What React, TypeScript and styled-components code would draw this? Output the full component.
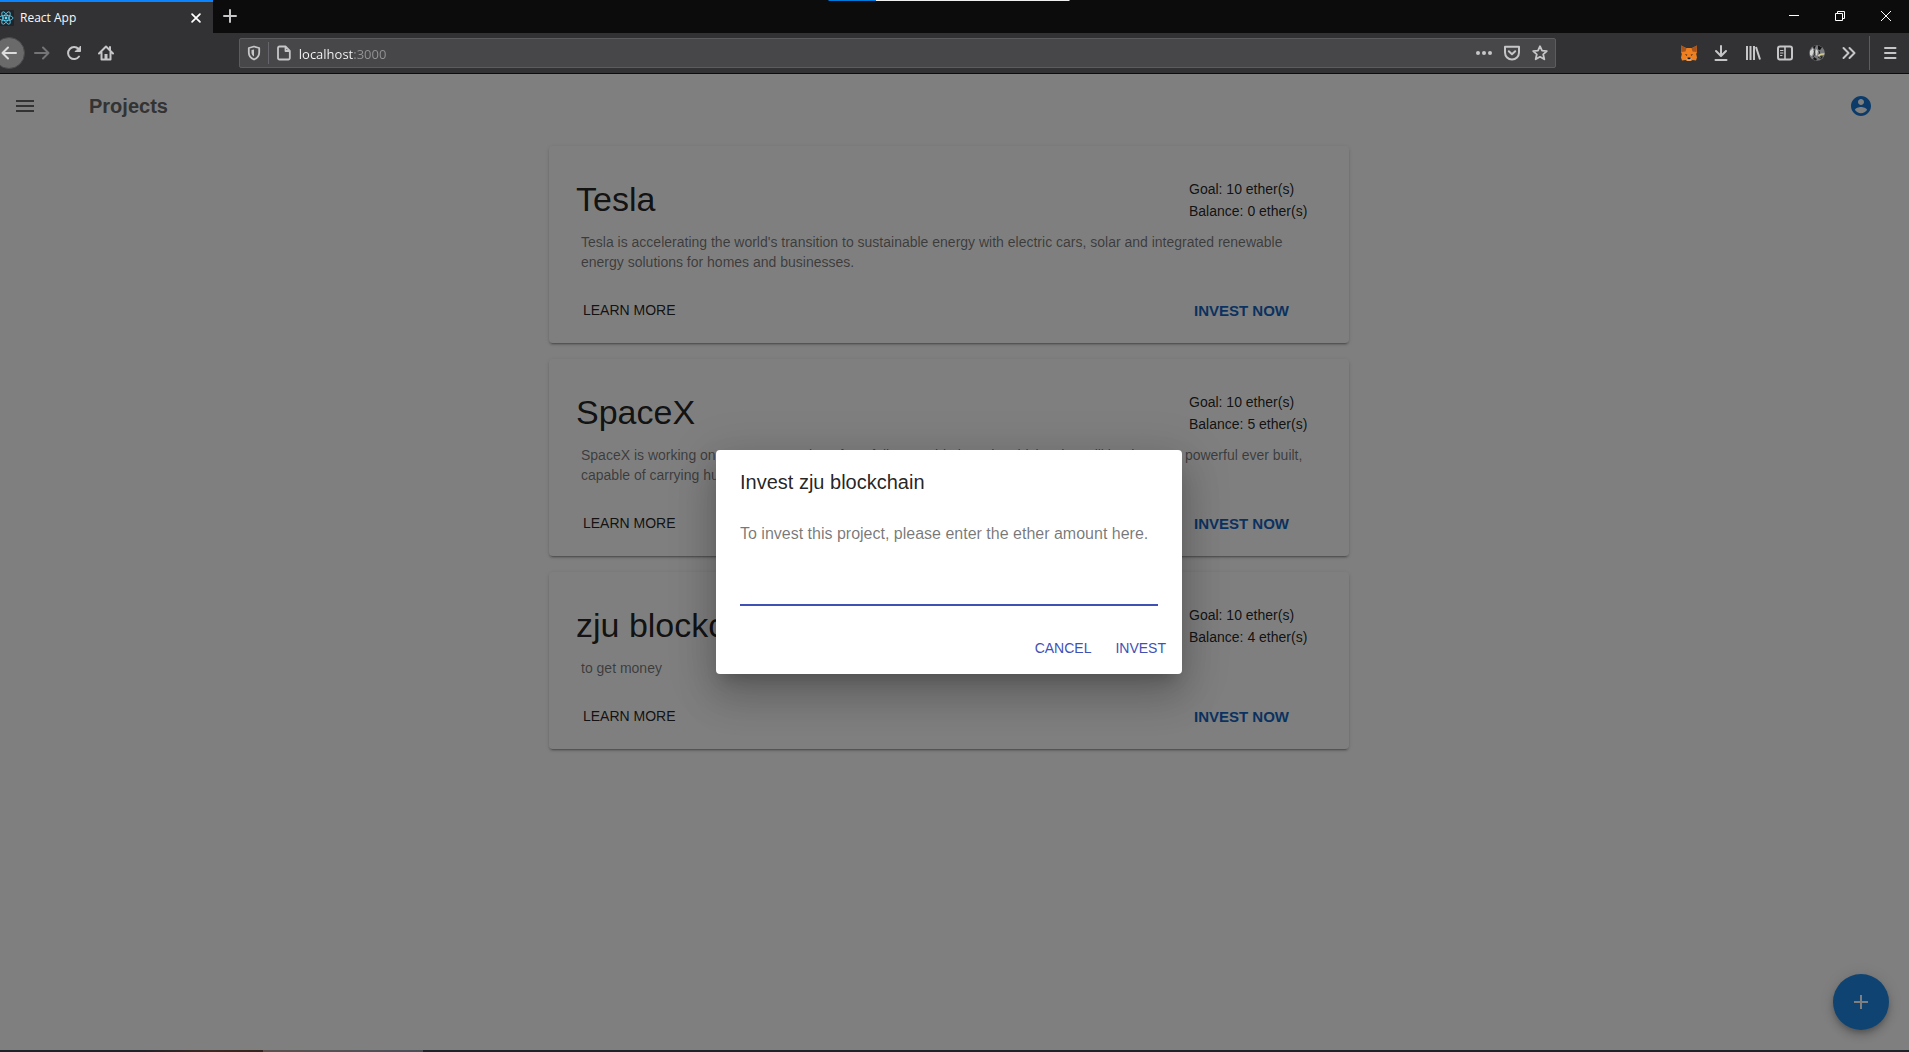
import React, { useState } from "react";
import styled, { createGlobalStyle } from "styled-components";

const GlobalStyle = createGlobalStyle`
  *, *::before, *::after { box-sizing: border-box; }
  html, body { margin: 0; background: #0c0c0d; overflow: hidden; }
  body { font-family: "Liberation Sans", Arial, sans-serif; }
  h1, h2, p { margin: 0; padding: 0; font-weight: 400; }
  button, input { font-family: inherit; margin: 0; border: 0; outline: 0; }
  button { padding: 0; background: transparent; cursor: pointer; }
`;

/* The window hangs over the left screen edge by 11px. */
const Window = styled.div`
  position: relative;
  display: flex;
  flex-direction: column;
  min-height: 100vh;
  margin-left: -11px;
`;

/* ---------- browser chrome ---------- */

const DragHint = styled.div`
  position: absolute;
  top: 0;
  left: 50%;
  width: 241px;
  height: 1px;
  transform: translateX(-50%);
  background: linear-gradient(90deg, #0078d7 48px, #f0f0f0 48px);
`;

const TabStrip = styled.header`
  display: flex;
  height: 33px;
  background: #0c0c0d;
`;

const Tab = styled.div`
  display: flex;
  align-items: center;
  gap: 6px;
  width: 224px;
  padding: 0 5px 0 9px;
  border-top: 2px solid #0a84ff;
  background: #323234;
  color: #f9f9fa;
  font: 12px/16px "Open Sans", "Noto Sans", sans-serif;
`;

const TabTitle = styled.span`
  flex: 1;
`;

const ChromeButton = styled.button<{ $width?: number; $dim?: boolean }>`
  display: flex;
  align-items: center;
  justify-content: center;
  width: ${(p) => p.$width ?? 32}px;
  height: 32px;
  flex: none;
  color: ${(p) => (p.$dim ? "#747476" : "#c6c6c8")};
`;

const BackButton = styled(ChromeButton)`
  margin-right: 1px;
  border: 1px solid #4a4a4c;
  border-radius: 50%;
  background: #6a6a6b;
  color: #dcdcdd;
`;

const WindowControls = styled.div`
  display: flex;
  margin-left: auto;
  color: #fff;
`;

const ControlButton = styled(ChromeButton)`
  color: #fff;
`;

const Toolbar = styled.nav`
  display: flex;
  align-items: center;
  height: 41px;
  padding: 0 3px 0 4px;
  border-bottom: 1px solid #0c0c0d;
  background: #323234;
`;

const Spring = styled.div`
  flex: 117 1 0;
`;

const AddressBar = styled.div`
  display: flex;
  align-items: center;
  flex: 1317 1 0;
  height: 30px;
  padding: 0 1px 0 0;
  border: 1px solid #5c5c5e;
  border-radius: 2px;
  background: #474749;
`;

const AddressDivider = styled.span`
  width: 1px;
  height: 22px;
  background: #65656c;
`;

const AddressInput = styled.input`
  flex: 1;
  min-width: 0;
  padding: 1px 0 0;
  color: transparent;
  background: linear-gradient(90deg, #f9f9fa 55px, #949496 55px);
  background-clip: text;
  -webkit-background-clip: text;
  font: 13px/20px "Open Sans", "Noto Sans", sans-serif;
`;

const ToolbarDivider = styled.span`
  width: 1px;
  height: 34px;
  margin: 0 4px;
  background: #5c5c5e;
`;

/* ---------- page ---------- */

const Page = styled.div`
  position: relative;
  flex: 1;
  background: #fff;
  color: rgba(0, 0, 0, 0.87);
`;

const AppBar = styled.header`
  display: flex;
  align-items: center;
  height: 64px;
  padding: 0 12px;
  color: #666;
`;

const IconButton = styled.button`
  display: flex;
  align-items: center;
  justify-content: center;
  width: 48px;
  height: 48px;
  color: inherit;
`;

const AccountButton = styled(IconButton)`
  margin: 0 12px 0 auto;
  color: #1976d2;
`;

const PageTitle = styled.h1`
  margin-left: 40px;
  font-size: 20px;
  line-height: 32px;
  font-weight: 700;
`;

const ProjectList = styled.main`
  display: flex;
  flex-direction: column;
  gap: 16px;
  max-width: 800px;
  margin: 8px auto;
`;

const Card = styled.article`
  padding: 32px 26px 17px 27px;
  border-radius: 4px;
  background: #fff;
  box-shadow: 0 3px 1px -2px rgba(0, 0, 0, 0.2), 0 2px 2px 0 rgba(0, 0, 0, 0.14),
    0 1px 5px 0 rgba(0, 0, 0, 0.12);
`;

const CardRow = styled.div`
  display: grid;
  grid-template-columns: 1fr 134px;
`;

const CardTitle = styled.h2`
  font-size: 34px;
  line-height: 42px;
`;

const Funding = styled.div`
  font-size: 14px;
  line-height: 22px;
`;

const Description = styled.p`
  margin: 10px 5px 22px;
  color: rgba(0, 0, 0, 0.54);
  font-size: 14px;
  line-height: 20px;
`;

const CardButton = styled.button<{ $strong?: boolean }>`
  justify-self: start;
  height: 32px;
  padding: 0 5px;
  color: ${(p) => (p.$strong ? "#1565c0" : "rgba(0, 0, 0, 0.87)")};
  font-size: ${(p) => (p.$strong ? 15 : 14)}px;
  font-weight: ${(p) => (p.$strong ? 700 : 400)};
  text-transform: uppercase;
`;

const CardActions = styled(CardRow)`
  padding-left: 2px;
`;

const Fab = styled.button`
  position: absolute;
  right: 20px;
  bottom: 20px;
  display: flex;
  align-items: center;
  justify-content: center;
  width: 56px;
  height: 56px;
  border-radius: 50%;
  background: #1e88e5;
  color: #fff;
  box-shadow: 0 3px 5px -1px rgba(0, 0, 0, 0.2), 0 6px 10px 0 rgba(0, 0, 0, 0.14),
    0 1px 18px 0 rgba(0, 0, 0, 0.12);
`;

/* ---------- dialog ---------- */

const Backdrop = styled.div`
  position: absolute;
  inset: 0;
  display: flex;
  align-items: center;
  justify-content: center;
  background: rgba(0, 0, 0, 0.5);
`;

const Dialog = styled.form`
  width: 466px;
  border-radius: 4px;
  background: #fff;
  box-shadow: 0 11px 15px -7px rgba(0, 0, 0, 0.2), 0 24px 38px 3px rgba(0, 0, 0, 0.14),
    0 9px 46px 8px rgba(0, 0, 0, 0.12);
`;

const DialogTitle = styled.h2`
  padding: 16px 24px;
  font-size: 20px;
  line-height: 32px;
`;

const DialogBody = styled.div`
  display: flex;
  flex-direction: column;
  gap: 12px;
  padding: 8px 24px 16px;
`;

const DialogText = styled.label`
  color: rgba(0, 0, 0, 0.54);
  font-size: 16px;
  line-height: 24px;
`;

const AmountInput = styled.input`
  width: 100%;
  height: 48px;
  padding: 16px 0 0;
  border-bottom: 2px solid #3f51b5;
  background: transparent;
  font-size: 16px;
`;

const DialogActions = styled.div`
  display: flex;
  justify-content: flex-end;
  gap: 8px;
  padding: 8px;
`;

const DialogButton = styled.button`
  min-width: 64px;
  height: 36px;
  padding: 0 8px;
  color: #3f51b5;
  font-size: 14px;
  text-transform: uppercase;
`;

const TaskbarEdge = styled.footer`
  height: 2px;
  background: linear-gradient(
    90deg,
    #1c242a 150px,
    #3a2a24 220px,
    #33251f 274px,
    #5a5250 274px,
    #485058 434px,
    #1c242a 434px
  );
`;

/* ---------- icons ---------- */

type IconProps = { size?: number; children: React.ReactNode };

const LineIcon = ({ size = 16, children }: IconProps) => (
  <svg
    width={size}
    height={size}
    viewBox="0 0 16 16"
    fill="none"
    stroke="currentColor"
    strokeWidth="2"
    strokeLinecap="round"
    strokeLinejoin="round"
    aria-hidden="true"
  >
    {children}
  </svg>
);

const ReactLogo = () => (
  <svg width="16" height="16" viewBox="0 0 16 16" aria-hidden="true">
    <rect width="16" height="16" rx="1" fill="#20232a" />
    <g fill="none" stroke="#61dafb" strokeWidth="0.8">
      <ellipse cx="8" cy="8" rx="7" ry="2.7" />
      <ellipse cx="8" cy="8" rx="7" ry="2.7" transform="rotate(60 8 8)" />
      <ellipse cx="8" cy="8" rx="7" ry="2.7" transform="rotate(120 8 8)" />
    </g>
    <circle cx="8" cy="8" r="1.4" fill="#61dafb" />
  </svg>
);

const FoxIcon = () => (
  <svg width="16" height="16" viewBox="0 0 16 16" aria-hidden="true">
    <path d="M0 .5 5 3h6l5-2.500V7l-.8 2 .8 3.500-1 3-3.500-.5-1.500 1H6l-1.500-1L1 15.500l-1-3L.8 9 0 7z" fill="#f0801f" />
    <path d="M0 .5 5.500 3.200 4.500 6.500.3 7z" fill="#a8541d" />
    <path d="M16 .5 10.500 3.200l1 3.300 4.200.5z" fill="#a8541d" />
    <path d="M3.700 9.300l2.600.3-.4 1.300zM12.300 9.300l-2.600.3.400 1.300z" fill="#4b3324" />
    <path d="M5.500 13h5l-.8 2.500H6.300z" fill="#d9c3b0" />
    <path d="M6.600 12.600h2.800l.2 1.600H6.400z" fill="#201a18" />
  </svg>
);

const PhotoIcon = () => (
  <svg width="16" height="16" viewBox="0 0 16 16" aria-hidden="true">
    <circle cx="8" cy="8" r="7.800" fill="#77797a" />
    <path d="M4 1.500 7 .5 5 5zM9 .500l4 1.800-2 3-2-1zM5 12l3 2-1 1.600-3-1.400z" fill="#151515" />
    <path d="M1 6l3-3 1 3-2 5-2-1zM7 4l2 2-1 5-2-2z" fill="#d2d3d3" />
    <path d="M5 5l1 4-2 3M10 6l1 3M9 12l3 2" stroke="#2c2c2c" fill="none" />
    <path d="M8.500 10.500l3-2 4-.3-.3 1.600-3.200.2-2 1.500z" fill="#d8cf91" />
    <path d="M11 11l3 .5-1.500 2.500z" fill="#1c1c1c" />
  </svg>
);

const BrowserChrome = () => {
  const [address, setAddress] = useState("localhost:3000");
  return (
    <>
      <TabStrip>
        <Tab>
          <ReactLogo />
          <TabTitle>React App</TabTitle>
          <ControlButton $width={24} aria-label="Close tab">
            <LineIcon size={14}>
              <path d="M3.500 3.500l9 9M12.500 3.500l-9 9" />
            </LineIcon>
          </ControlButton>
        </Tab>
        <ChromeButton $width={34} aria-label="New tab">
          <LineIcon>
            <path d="M8 2v12M2 8h12" />
          </LineIcon>
        </ChromeButton>
        <WindowControls>
          <ControlButton $width={46} aria-label="Minimize">
            <svg width="10" height="10" stroke="currentColor" aria-hidden="true">
              <path d="M0 4.500h10" />
            </svg>
          </ControlButton>
          <ControlButton $width={46} aria-label="Restore">
            <svg width="10" height="10" fill="none" stroke="currentColor" aria-hidden="true">
              <path d="M.5 2.500h7v7h-7zM2.500 2.500v-2h7v7h-2" />
            </svg>
          </ControlButton>
          <ControlButton $width={46} aria-label="Close window">
            <svg width="10" height="10" stroke="currentColor" aria-hidden="true">
              <path d="M0 0l10 10M10 0L0 10" />
            </svg>
          </ControlButton>
        </WindowControls>
      </TabStrip>
      <DragHint />
      <Toolbar>
        <BackButton aria-label="Back">
          <LineIcon>
            <path d="M15 8H1.500M7 2.500 1.500 8 7 13.500" />
          </LineIcon>
        </BackButton>
        <ChromeButton $dim aria-label="Forward">
          <LineIcon>
            <path d="M1 8h13.500M9 2.500 14.500 8 9 13.500" />
          </LineIcon>
        </ChromeButton>
        <ChromeButton aria-label="Reload">
          <LineIcon>
            <path d="M13 11.500A6 6 0 1 1 12.500 4" />
            <path d="M14.500 1.500v5h-5z" fill="currentColor" strokeWidth="1" />
          </LineIcon>
        </ChromeButton>
        <ChromeButton aria-label="Home">
          <LineIcon>
            <path d="M1 8.500 8 1.500l7 7M3.500 7.500v7h9v-7" />
            <path d="M6.500 9h3v5h-3z" fill="currentColor" stroke="none" />
            <path d="M12 2v3" />
          </LineIcon>
        </ChromeButton>
        <Spring />
        <AddressBar>
          <ChromeButton $width={28} aria-label="Tracking protection">
            <LineIcon>
              <path d="M8 1.500 13.200 3v4.500c0 3.500-2 5.700-5.200 7-3.200-1.300-5.200-3.500-5.200-7V3z" strokeWidth="1.800" />
              <path d="M8 4.500v7c-1.700-1-2.500-2.200-2.500-4v-2.400z" fill="currentColor" stroke="none" />
            </LineIcon>
          </ChromeButton>
          <AddressDivider />
          <ChromeButton $width={30} aria-label="Site information">
            <LineIcon>
              <path d="M3.500 1.500h6l4.300 4.300v7.200a1.500 1.500 0 0 1-1.500 1.500H3.500A1.500 1.500 0 0 1 2 13V3a1.500 1.500 0 0 1 1.500-1.500zM9.500 1.500V6h4" strokeWidth="1.800" />
            </LineIcon>
          </ChromeButton>
          <AddressInput
            aria-label="Address"
            value={address}
            onChange={(event) => setAddress(event.target.value)}
          />
          <ChromeButton $width={28} aria-label="Page actions">
            <LineIcon>
              <g fill="currentColor" stroke="none">
                <circle cx="2" cy="8" r="2" />
                <circle cx="8" cy="8" r="2" />
                <circle cx="14" cy="8" r="2" />
              </g>
            </LineIcon>
          </ChromeButton>
          <ChromeButton $width={28} aria-label="Save to Pocket">
            <LineIcon>
              <path d="M1 1.800h14v5.700a7 7 0 0 1-14 0zM4.800 6.300 8 9.300l3.200-3" />
            </LineIcon>
          </ChromeButton>
          <ChromeButton $width={28} aria-label="Bookmark">
            <LineIcon>
              <path d="M8 1.200l2 4.400 4.800.5-3.600 3.200 1.100 5L8 11.800l-4.300 2.500 1.100-5L1.200 6.100 6 5.600z" strokeWidth="1.800" />
            </LineIcon>
          </ChromeButton>
        </AddressBar>
        <Spring />
        <ChromeButton aria-label="MetaMask">
          <FoxIcon />
        </ChromeButton>
        <ChromeButton aria-label="Downloads">
          <LineIcon>
            <path d="M8 1v9.500M3 6l5 5 5-5M2.500 15h11" />
          </LineIcon>
        </ChromeButton>
        <ChromeButton aria-label="Library">
          <LineIcon>
            <path d="M2 1v14M5.500 1v14M9 1v14M11 2l4 12.500" strokeLinecap="butt" />
          </LineIcon>
        </ChromeButton>
        <ChromeButton aria-label="Sidebars">
          <LineIcon>
            <rect x="1" y="1.500" width="14" height="13" rx="2" />
            <path d="M8 2v12" strokeWidth="1.600" />
            <path d="M3.500 5.500h2.500M3.500 8h2.500M3.500 10.500h1.500" strokeWidth="1" />
          </LineIcon>
        </ChromeButton>
        <ChromeButton aria-label="Extension">
          <PhotoIcon />
        </ChromeButton>
        <ChromeButton aria-label="More tools">
          <LineIcon>
            <path d="M2.500 3l5 5-5 5M8.500 3l5 5-5 5" />
          </LineIcon>
        </ChromeButton>
        <ToolbarDivider />
        <ChromeButton aria-label="Menu">
          <LineIcon>
            <path d="M3 3h10.500M3 8h10.500M3 13h10.500" />
          </LineIcon>
        </ChromeButton>
      </Toolbar>
    </>
  );
};

/* ---------- content ---------- */

type Project = { name: string; about: string; goal: number; balance: number };

const projects: Project[] = [
  {
    name: "Tesla",
    about:
      "Tesla is accelerating the world's transition to sustainable energy with electric cars, solar and integrated renewable energy solutions for homes and businesses.",
    goal: 10,
    balance: 0,
  },
  {
    name: "SpaceX",
    about:
      "SpaceX is working on a next generation of our fully reusable launch vehicles that will be the most powerful ever built, capable of carrying humans to Mars and other destinations in the solar system.",
    goal: 10,
    balance: 5,
  },
  { name: "zju blockchain", about: "to get money", goal: 10, balance: 4 },
];

const ProjectCard = ({ project }: { project: Project }) => (
  <Card>
    <CardRow>
      <CardTitle>{project.name}</CardTitle>
      <Funding>
        <p>Goal: {project.goal} ether(s)</p>
        <p>Balance: {project.balance} ether(s)</p>
      </Funding>
    </CardRow>
    <Description>{project.about}</Description>
    <CardActions>
      <CardButton>Learn more</CardButton>
      <CardButton $strong>Invest now</CardButton>
    </CardActions>
  </Card>
);

const InvestDialog = ({ project }: { project: Project }) => {
  const [amount, setAmount] = useState("");
  return (
    <Backdrop>
      <Dialog role="dialog" aria-labelledby="invest-title" onSubmit={(event) => event.preventDefault()}>
        <DialogTitle id="invest-title">Invest {project.name}</DialogTitle>
        <DialogBody>
          <DialogText htmlFor="amount">
            To invest this project, please enter the ether amount here.
          </DialogText>
          <AmountInput
            id="amount"
            inputMode="decimal"
            value={amount}
            onChange={(event) => setAmount(event.target.value)}
          />
        </DialogBody>
        <DialogActions>
          <DialogButton type="button">Cancel</DialogButton>
          <DialogButton type="submit">Invest</DialogButton>
        </DialogActions>
      </Dialog>
    </Backdrop>
  );
};

export default function App() {
  return (
    <>
      <GlobalStyle />
      <Window>
        <BrowserChrome />
        <Page>
          <AppBar>
            <IconButton aria-label="Open menu">
              <svg width="24" height="24" fill="currentColor" aria-hidden="true">
                <path d="M3 18h18v-2H3v2zm0-5h18v-2H3v2zm0-7v2h18V6H3z" />
              </svg>
            </IconButton>
            <PageTitle>Projects</PageTitle>
            <AccountButton aria-label="Account">
              <svg width="24" height="24" fill="currentColor" aria-hidden="true">
                <path d="M12 2C6.480 2 2 6.480 2 12s4.480 10 10 10 10-4.480 10-10S17.520 2 12 2zm0 3c1.660 0 3 1.340 3 3s-1.340 3-3 3-3-1.340-3-3 1.340-3 3-3zm0 14.200c-2.500 0-4.710-1.280-6-3.220.03-1.990 4-3.080 6-3.080 1.990 0 5.970 1.090 6 3.080-1.290 1.940-3.500 3.220-6 3.220z" />
              </svg>
            </AccountButton>
          </AppBar>
          <ProjectList>
            {projects.map((project) => (
              <ProjectCard key={project.name} project={project} />
            ))}
          </ProjectList>
          <Fab aria-label="Add project">
            <svg width="24" height="24" fill="currentColor" aria-hidden="true">
              <path d="M19 13h-6v6h-2v-6H5v-2h6V5h2v6h6v2z" />
            </svg>
          </Fab>
          <InvestDialog project={projects[2]} />
        </Page>
        <TaskbarEdge />
      </Window>
    </>
  );
}
